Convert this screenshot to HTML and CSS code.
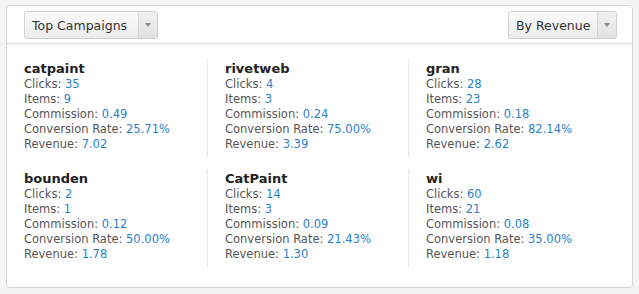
FILE: index.html
```html
<!DOCTYPE html>
<html>
<head>
<meta charset="utf-8">
<link rel="stylesheet" href="styles.css">
</head>
<body>
<div class="panel">
  <div class="header">
    <div class="select"><span class="select-label">Top Campaigns</span><span class="select-arrow"><span class="tri"></span></span></div>
    <div class="select"><span class="select-label">By Revenue</span><span class="select-arrow"><span class="tri"></span></span></div>
  </div>
  <div class="grid">
    <div class="cell">
      <div class="name">catpaint</div>
      <div class="row">Clicks: <span class="v">35</span></div>
      <div class="row">Items: <span class="v">9</span></div>
      <div class="row">Commission: <span class="v">0.49</span></div>
      <div class="row">Conversion Rate: <span class="v">25.71%</span></div>
      <div class="row">Revenue: <span class="v">7.02</span></div>
    </div>
    <div class="cell div">
      <div class="name">rivetweb</div>
      <div class="row">Clicks: <span class="v">4</span></div>
      <div class="row">Items: <span class="v">3</span></div>
      <div class="row">Commission: <span class="v">0.24</span></div>
      <div class="row">Conversion Rate: <span class="v">75.00%</span></div>
      <div class="row">Revenue: <span class="v">3.39</span></div>
    </div>
    <div class="cell div">
      <div class="name">gran</div>
      <div class="row">Clicks: <span class="v">28</span></div>
      <div class="row">Items: <span class="v">23</span></div>
      <div class="row">Commission: <span class="v">0.18</span></div>
      <div class="row">Conversion Rate: <span class="v">82.14%</span></div>
      <div class="row">Revenue: <span class="v">2.62</span></div>
    </div>
    <div class="cell">
      <div class="name">bounden</div>
      <div class="row">Clicks: <span class="v">2</span></div>
      <div class="row">Items: <span class="v">1</span></div>
      <div class="row">Commission: <span class="v">0.12</span></div>
      <div class="row">Conversion Rate: <span class="v">50.00%</span></div>
      <div class="row">Revenue: <span class="v">1.78</span></div>
    </div>
    <div class="cell div">
      <div class="name">CatPaint</div>
      <div class="row">Clicks: <span class="v">14</span></div>
      <div class="row">Items: <span class="v">3</span></div>
      <div class="row">Commission: <span class="v">0.09</span></div>
      <div class="row">Conversion Rate: <span class="v">21.43%</span></div>
      <div class="row">Revenue: <span class="v">1.30</span></div>
    </div>
    <div class="cell div">
      <div class="name">wi</div>
      <div class="row">Clicks: <span class="v">60</span></div>
      <div class="row">Items: <span class="v">21</span></div>
      <div class="row">Commission: <span class="v">0.08</span></div>
      <div class="row">Conversion Rate: <span class="v">35.00%</span></div>
      <div class="row">Revenue: <span class="v">1.18</span></div>
    </div>
  </div>
</div>
</body>
</html>
```
FILE: styles.css
```css
html, body { margin: 0; padding: 0; }
body {
  background: #f4f4f4;
  font-family: "DejaVu Sans", sans-serif;
  color: #444;
  padding: 5px 6px 0 6px;
}
.panel {
  width: 625px;
  height: 281px;
  background: #fff;
  border: 1px solid #d6d6d6;
  border-radius: 4px;
}
.header {
  display: flex;
  justify-content: space-between;
  padding: 5px 15px 4px 17px;
  border-bottom: 1px dotted #c8c8c8;
}
.select {
  display: flex;
  height: 26px;
  border: 1px solid #cfcfcf;
  border-radius: 3px;
  background: linear-gradient(#fbfbfb, #ececec);
  font-size: 12.5px;
  color: #333;
  align-items: stretch;
}
.select-label {
  display: flex;
  align-items: center;
  padding: 0 0 0 7px;
}
.select:first-child .select-label { width: 106px; }
.select:last-child .select-label { width: 81px; }
.select-arrow {
  width: 18px;
  border-left: 1px solid #d2d2d2;
  display: flex;
  align-items: center;
  justify-content: center;
  background: linear-gradient(#f1f1f1, #e2e2e2);
  border-radius: 0 3px 3px 0;
}
.tri {
  width: 0; height: 0;
  border-left: 3px solid transparent;
  border-right: 3px solid transparent;
  border-top: 4px solid #8a8a8a;
}
.grid {
  display: grid;
  grid-template-columns: 200px 201px 1fr;
  row-gap: 13px;
  margin-top: 16px;
}
.cell {
  padding: 1px 0 5px 17px;
}
.cell.div { border-left: 1px dotted #cfcfcf; }
.name {
  font-weight: bold;
  font-size: 13px;
  color: #222;
  line-height: 16px;
}
.row {
  font-size: 11.5px;
  line-height: 15px;
  color: #555;
  white-space: nowrap;
}
.v { color: #2a7fc9; }
```
